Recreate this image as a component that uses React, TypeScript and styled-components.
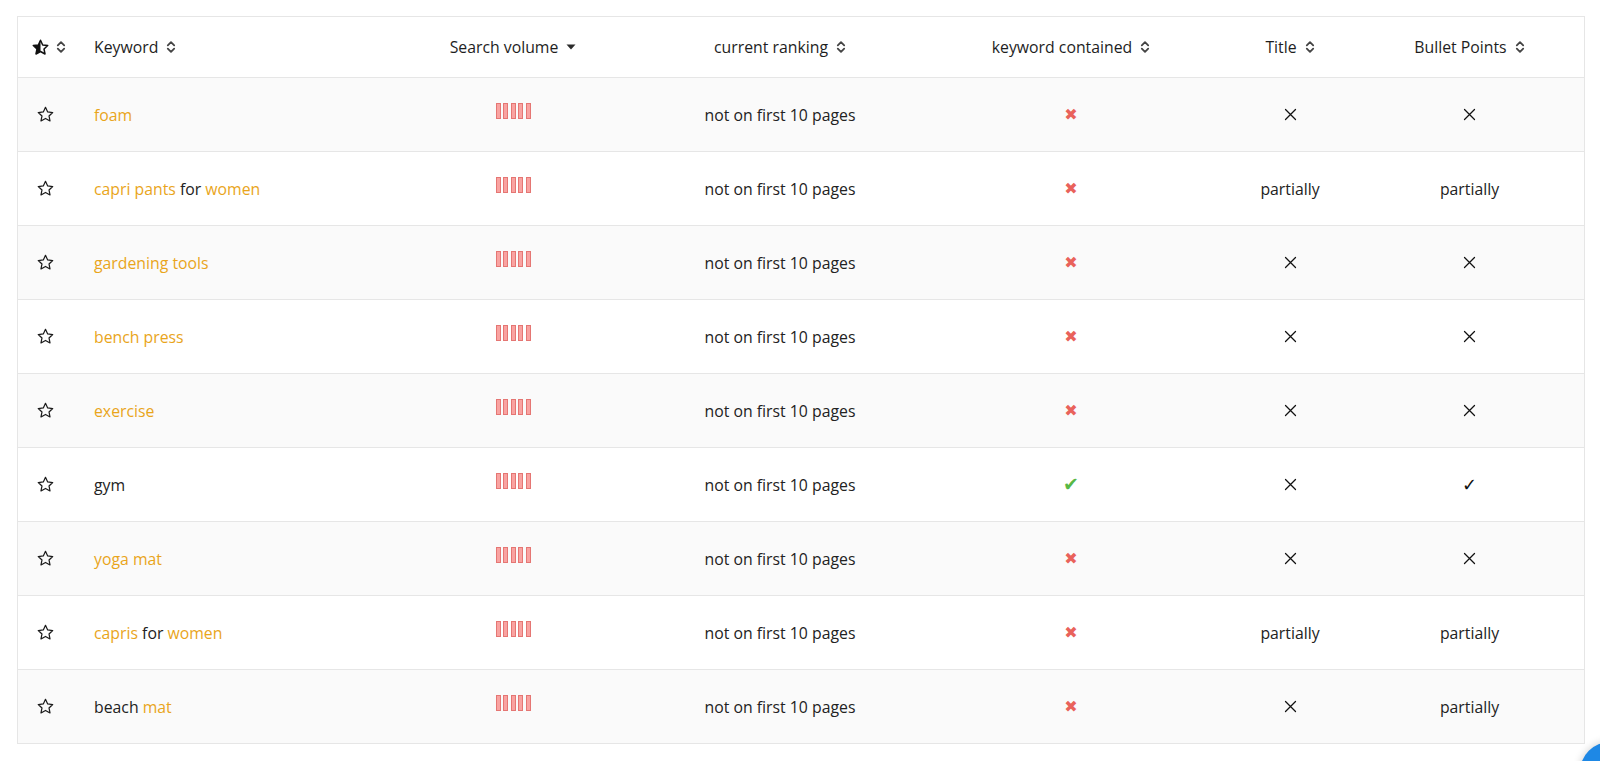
import React from "react";
import styled, { createGlobalStyle } from "styled-components";

const GlobalStyle = createGlobalStyle`
  html, body { margin: 0; padding: 0; background: #ffffff; }
  body { font-family: "Open Sans", "Noto Sans", Arial, sans-serif; color: #222; overflow: hidden; }
`;

const Page = styled.div`
  padding: 16px 15px 0 17px;
`;

const Table = styled.div`
  border: 1px solid #e6e6e6;
  border-bottom: none;
  width: 1566px;
`;

const cols = "55px 310px 260px 274px 308px 130px 229px";

const HeaderRow = styled.div`
  display: grid;
  grid-template-columns: ${cols};
  height: 60px;
  border-bottom: 1px solid #e6e6e6;
  background: #fff;
`;

const Row = styled.div<{ $shade: boolean }>`
  display: grid;
  grid-template-columns: ${cols};
  height: 73px;
  border-bottom: 1px solid #e6e6e6;
  background: ${(p) => (p.$shade ? "#fafafa" : "#ffffff")};
`;

const HeadCell = styled.div<{ $align?: "left" | "center" }>`
  display: flex;
  align-items: center;
  justify-content: ${(p) => (p.$align === "left" ? "flex-start" : "center")};
  padding-left: ${(p) => (p.$align === "left" ? "21px" : "0")};
  gap: 8px;
  font-size: 15.8px;
  color: #1e1e1e;
`;

const Cell = styled.div<{ $align?: "left" | "center" }>`
  display: flex;
  align-items: center;
  justify-content: ${(p) => (p.$align === "left" ? "flex-start" : "center")};
  padding-left: ${(p) => (p.$align === "left" ? "21px" : "0")};
  font-size: 15.8px;
  color: #222;
`;

const StarHeadCell = styled(HeadCell)`
  padding-left: 6px;
  gap: 7px;
`;

const Highlight = styled.span`
  color: #e9a51b;
`;

const Plain = styled.span`
  color: #222;
`;

const Bars = styled.div`
  display: flex;
  gap: 2.5px;
  margin-top: -7px;
`;

const Bar = styled.span`
  display: block;
  width: 3px;
  height: 14px;
  background: #f9a3a1;
  border: 1px solid #e57673;
`;

const RedCross = styled.span`
  color: #e9625b;
  font-family: "DejaVu Sans", sans-serif;
  font-size: 16px;
  line-height: 1;
`;

const GreenCheck = styled.span`
  color: #58b846;
  font-family: "DejaVu Sans", sans-serif;
  font-size: 19px;
  line-height: 1;
`;

const ThinCheck = styled.span`
  color: #111;
  font-family: "DejaVu Sans", sans-serif;
  font-size: 18px;
  line-height: 1;
`;

const ThinX = styled.svg`
  display: block;
`;

const Fab = styled.div`
  position: fixed;
  left: 1580px;
  top: 742px;
  width: 60px;
  height: 60px;
  border-radius: 50%;
  background: #1e88e5;
  box-shadow: 0 0 8px rgba(0, 0, 0, 0.2);
`;

const SortIcon = () => (
  <svg width="10" height="14" viewBox="0 0 10 14" fill="none">
    <path d="M1.8 5.3 L5 2.1 L8.2 5.3" stroke="#444" strokeWidth="1.8" strokeLinecap="round" strokeLinejoin="round" />
    <path d="M1.8 8.7 L5 11.9 L8.2 8.7" stroke="#444" strokeWidth="1.8" strokeLinecap="round" strokeLinejoin="round" />
  </svg>
);

const CaretDown = () => (
  <svg width="10" height="6" viewBox="0 0 10 6">
    <path d="M0.5 0.5 L9.5 0.5 L5 5.5 Z" fill="#2a2a2a" />
  </svg>
);

const starPath =
  "M8 1.2 L10.05 5.6 L14.8 6.15 L11.3 9.4 L12.25 14.1 L8 11.75 L3.75 14.1 L4.7 9.4 L1.2 6.15 L5.95 5.6 Z";

const HalfStar = () => (
  <svg width="17" height="17" viewBox="0 0 16 16">
    <defs>
      <clipPath id="leftHalf">
        <rect x="0" y="0" width="8" height="16" />
      </clipPath>
    </defs>
    <path d={starPath} fill="#111" clipPath="url(#leftHalf)" />
    <path d={starPath} fill="none" stroke="#111" strokeWidth="1.4" strokeLinejoin="round" />
  </svg>
);

const OutlineStar = () => (
  <svg width="17" height="17" viewBox="0 0 16 16">
    <path d={starPath} fill="none" stroke="#1a1a1a" strokeWidth="1.15" strokeLinejoin="round" />
  </svg>
);

const XMark = () => (
  <ThinX width="13" height="13" viewBox="0 0 13 13">
    <path d="M1.5 1.5 L11.5 11.5 M11.5 1.5 L1.5 11.5" stroke="#111" strokeWidth="1.25" strokeLinecap="round" />
  </ThinX>
);

type Mark = "x" | "check" | "partially";

interface RowData {
  kw: [string, boolean][];
  contained: boolean;
  title: Mark;
  bullet: Mark;
}

const rows: RowData[] = [
  { kw: [["foam", true]], contained: false, title: "x", bullet: "x" },
  {
    kw: [["capri pants", true], [" for ", false], ["women", true]],
    contained: false,
    title: "partially",
    bullet: "partially",
  },
  { kw: [["gardening tools", true]], contained: false, title: "x", bullet: "x" },
  { kw: [["bench press", true]], contained: false, title: "x", bullet: "x" },
  { kw: [["exercise", true]], contained: false, title: "x", bullet: "x" },
  { kw: [["gym", false]], contained: true, title: "x", bullet: "check" },
  { kw: [["yoga mat", true]], contained: false, title: "x", bullet: "x" },
  {
    kw: [["capris", true], [" for ", false], ["women", true]],
    contained: false,
    title: "partially",
    bullet: "partially",
  },
  { kw: [["beach ", false], ["mat", true]], contained: false, title: "x", bullet: "partially" },
];

const renderMark = (m: Mark) => {
  if (m === "x") return <XMark />;
  if (m === "check") return <ThinCheck>✓</ThinCheck>;
  return <span>partially</span>;
};

export default function App() {
  return (
    <>
      <GlobalStyle />
      <Page>
        <Table>
          <HeaderRow>
            <StarHeadCell>
              <HalfStar />
              <SortIcon />
            </StarHeadCell>
            <HeadCell $align="left">
              Keyword <SortIcon />
            </HeadCell>
            <HeadCell>
              Search volume <CaretDown />
            </HeadCell>
            <HeadCell>
              current ranking <SortIcon />
            </HeadCell>
            <HeadCell>
              keyword contained <SortIcon />
            </HeadCell>
            <HeadCell>
              Title <SortIcon />
            </HeadCell>
            <HeadCell>
              Bullet Points <SortIcon />
            </HeadCell>
          </HeaderRow>
          {rows.map((r, i) => (
            <Row key={i} $shade={i % 2 === 0}>
              <Cell>
                <OutlineStar />
              </Cell>
              <Cell $align="left">
                <span>
                  {r.kw.map(([t, hl], j) =>
                    hl ? <Highlight key={j}>{t}</Highlight> : <Plain key={j}>{t}</Plain>
                  )}
                </span>
              </Cell>
              <Cell>
                <Bars>
                  {[0, 1, 2, 3, 4].map((b) => (
                    <Bar key={b} />
                  ))}
                </Bars>
              </Cell>
              <Cell>not on first 10 pages</Cell>
              <Cell>{r.contained ? <GreenCheck>✔</GreenCheck> : <RedCross>✖</RedCross>}</Cell>
              <Cell>{renderMark(r.title)}</Cell>
              <Cell>{renderMark(r.bullet)}</Cell>
            </Row>
          ))}
        </Table>
      </Page>
      <Fab />
    </>
  );
}
